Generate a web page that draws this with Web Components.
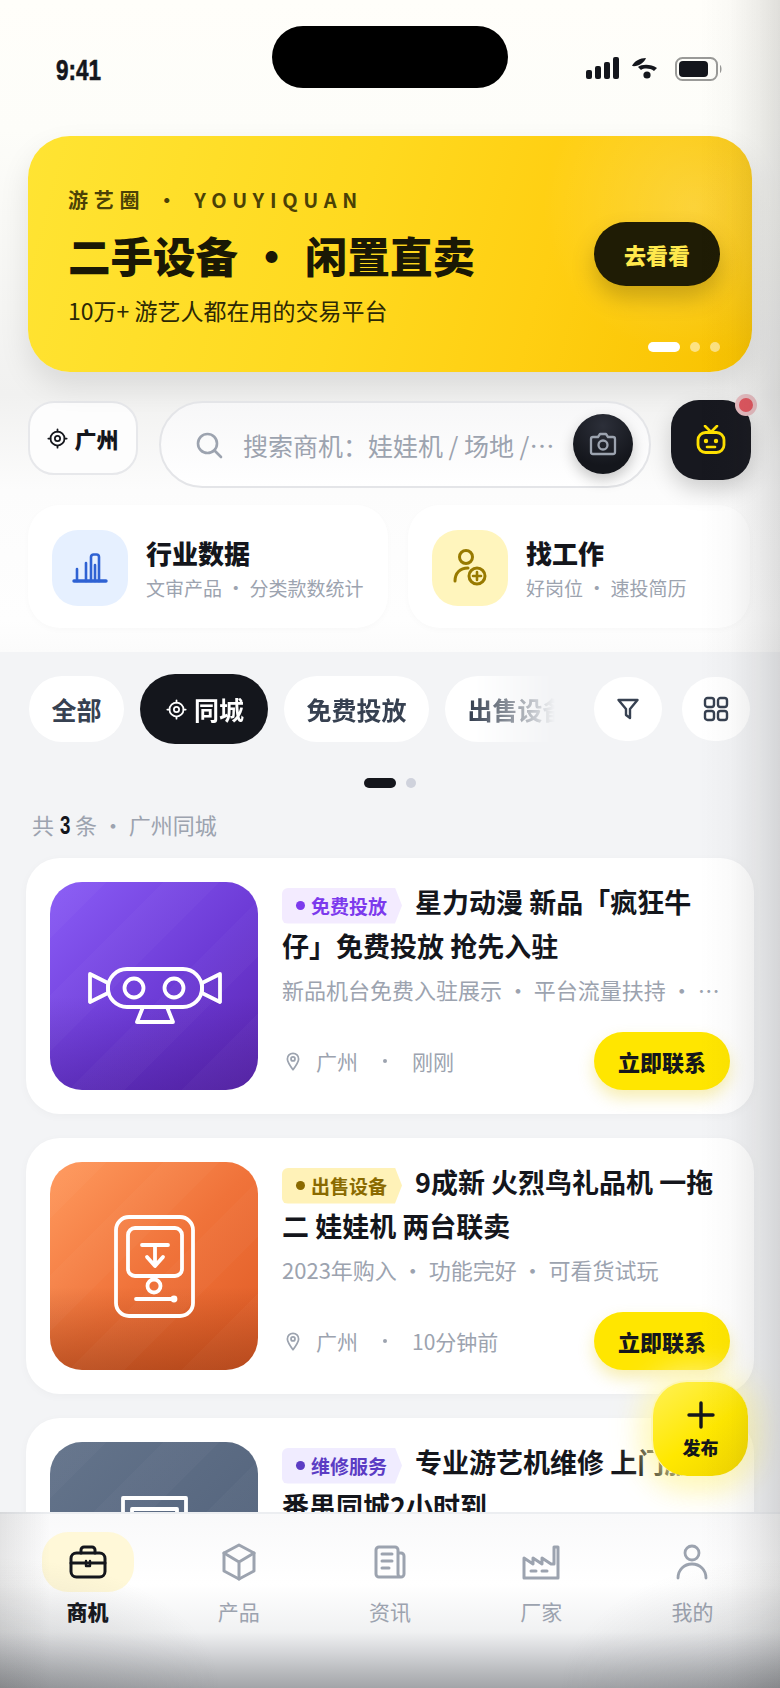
<!DOCTYPE html>
<html lang="zh-CN">
<head>
<meta charset="utf-8">
<title>游艺圈</title>
<style>
  html, body { margin: 0; padding: 0; background: #f3f4f6; }
  body { font-family: "Noto Sans CJK SC", "Noto Sans", sans-serif; color: #14161c; }
</style>
</head>
<body>
<app-screen>
  <status-bar></status-bar>
  <hero-banner></hero-banner>
  <search-row></search-row>
  <quick-links></quick-links>

  <div slot="lower">
    <filter-tabs></filter-tabs>
    <result-count></result-count>
    <listing-feed>
      <listing-card art="purple" tag="免费投放" tone="violet">星力动漫 新品「疯狂牛仔」免费投放 抢先入驻<span slot="desc">新品机台免费入驻展示 · 平台流量扶持 · 无中介费用</span><span slot="time">刚刚</span></listing-card>
      <listing-card art="orange" tag="出售设备" tone="gold">9成新 火烈鸟礼品机 一拖二 娃娃机 两台联卖<span slot="desc">2023年购入 · 功能完好 · 可看货试玩</span><span slot="time">10分钟前</span></listing-card>
      <listing-card art="slate" tag="维修服务" tone="indigo" partial>专业游艺机维修 上门服务 番禺同城2小时到</listing-card>
    </listing-feed>
  </div>

  <publish-fab slot="over"></publish-fab>
  <tab-bar slot="over"></tab-bar>
  <edge-shade slot="over"></edge-shade>
</app-screen>

<script>
// shared line icons
const svg = (w, h, box, body, extra = '') =>
  `<svg width="${w}" height="${h}" viewBox="${box}" fill="none" stroke="currentColor" stroke-linecap="round" stroke-linejoin="round" ${extra}>${body}</svg>`;

const locateIcon = (size) => svg(size, size, '0 0 24 24',
  `<circle cx="12" cy="12" r="8" stroke-width="2"/><circle cx="12" cy="12" r="3" stroke-width="2"/>
   <path d="M12 1.5v2.5M12 20v2.5M1.5 12H4M20 12h2.5" stroke-width="2"/>`);

class AppScreen extends HTMLElement {
  connectedCallback() {
    this.attachShadow({ mode: 'open' });
    this.shadowRoot.innerHTML = `
      <style>
        :host { display: block; position: relative; width: 780px; height: 1688px; overflow: hidden; background: #f3f4f6; }
        .upper { height: 652px; background: linear-gradient(180deg, #fffefa 0, #fdfdf9 130px, #f1f1f0 395px, #fcfcfc 490px, #fefefe 620px, #fbfbfb 652px); }
      </style>
      <div class="upper"><slot></slot></div>
      <slot name="lower"></slot>
      <slot name="over"></slot>
    `;
  }
}

class StatusBar extends HTMLElement {
  connectedCallback() {
    this.attachShadow({ mode: 'open' });
    this.shadowRoot.innerHTML = `
      <style>
        :host { display: block; position: relative; height: 136px; }
        .row { display: flex; justify-content: space-between; align-items: center; padding: 52px 57px 0 56px; height: 36px; }
        .time { display: inline-block; transform: scaleX(.75); transform-origin: left center; font: 700 30px/36px "Liberation Sans", sans-serif;
          -webkit-text-stroke: .6px #14161c; color: #14161c; }
        .icons { display: flex; align-items: center; }
        .island { position: absolute; left: 272px; top: 26px; width: 236px; height: 62px; border-radius: 31px; background: #000; }
      </style>
      <div class="island"></div>
      <div class="row">
        <span class="time">9:41</span>
        <span class="icons">
          <svg width="137" height="26" viewBox="0 0 137 26" fill="#14161c">
            <rect x="0" y="13" width="6" height="9" rx="2"/><rect x="9" y="9" width="6" height="13" rx="2"/>
            <rect x="18" y="5" width="6" height="17" rx="2"/><rect x="27" y="0" width="6" height="22" rx="2"/>
            <path d="M46 9 C48 4 54 1 60 1 C58 6 52 10 46 9Z"/>
            <path d="M52 10 C56 7 65 7 71 11 L68 14 C64 11 58 11 55 13Z"/>
            <circle cx="61" cy="18" r="3.6"/>
            <rect x="90" y="1" width="41" height="22" rx="6.5" fill="none" stroke="#9a9a98" stroke-width="2"/>
            <rect x="93" y="4" width="29" height="16" rx="4"/>
            <path d="M134 8 C136 9 136 15 134 16Z" fill="#9a9a98"/>
          </svg>
        </span>
      </div>
    `;
  }
}

class HeroBanner extends HTMLElement {
  connectedCallback() {
    this.attachShadow({ mode: 'open' });
    this.shadowRoot.innerHTML = `
      <style>
        :host { display: block; position: relative; margin: 0 28px; height: 236px; border-radius: 42px;
          background:
            radial-gradient(circle at 92% 30%, rgba(255,255,255,.2), rgba(255,255,255,0) 22%),
            linear-gradient(105deg, #ffe433 0, #ffd91f 45%, #ffcf12 70%, #f8c200 100%);
          box-shadow: 0 14px 30px rgba(0,0,0,.1); }
        .copy { padding: 49px 0 0 40px; }
        .kicker { font-size: 20px; line-height: 30px; font-weight: 700; letter-spacing: 5.7px; word-spacing: 1.5px; color: #4b4106; white-space: nowrap; }
        h1 { margin: 12px 0 0; font-size: 42.5px; line-height: 56px; font-weight: 900; word-spacing: 2.5px; color: #1a1805; white-space: nowrap; }
        p { margin: 10px 0 0; font-size: 23px; line-height: 34px; color: #2c2805; white-space: nowrap; }
        .go { position: absolute; right: 32px; top: 86px; width: 126px; height: 64px; border-radius: 32px; background: #1f1c05;
          color: #ffe94d; font-size: 22px; font-weight: 800; display: flex; align-items: center; justify-content: center;
          box-shadow: 0 12px 22px rgba(90,70,0,.3); }
        .dots { position: absolute; right: 32px; bottom: 20px; display: flex; gap: 10px; }
        .dots i { width: 10px; height: 10px; border-radius: 5px; background: rgba(255,255,255,.5); }
        .dots i:first-child { width: 32px; background: #fff; }
      </style>
      <div class="copy">
        <div class="kicker">游艺圈 · YOUYIQUAN</div>
        <h1>二手设备 · 闲置直卖</h1>
        <p>10万+ 游艺人都在用的交易平台</p>
      </div>
      <div class="go">去看看</div>
      <div class="dots"><i></i><i></i><i></i></div>
    `;
  }
}

class SearchRow extends HTMLElement {
  connectedCallback() {
    this.attachShadow({ mode: 'open' });
    this.shadowRoot.innerHTML = `
      <style>
        :host { display: flex; align-items: flex-start; margin-top: 29px; padding: 0 28px; height: 104px; }
        .city { box-sizing: border-box; width: 110px; height: 74px; border: 2px solid #e7e8eb; border-radius: 26px; background: #fdfdfd;
          display: flex; align-items: center; justify-content: center; gap: 6px; font-size: 22px; font-weight: 800; color: #14161c; }
        .search { box-sizing: border-box; position: relative; width: 492px; height: 87px; margin-left: 21px; border: 2px solid #e4e5e8; border-radius: 44px;
          background: linear-gradient(180deg, #f7f7f8, #fff); display: flex; align-items: center; padding-left: 34px; color: #9ca3af; }
        .text { margin-left: 20px; width: 314px; font-size: 25px; line-height: 36px; white-space: nowrap; overflow: hidden; text-overflow: ellipsis; }
        .camera { position: absolute; right: 16px; top: 11px; width: 60px; height: 60px; border-radius: 50%; color: #9ca3af;
          background: radial-gradient(circle at 50% 20%, #2c2f39, #14161c 70%); display: flex; align-items: center; justify-content: center;
          box-shadow: 0 6px 14px rgba(0,0,0,.22); }
        .bot { position: relative; width: 80px; height: 80px; margin-left: 20px; margin-top: -1px; border-radius: 28px; background: #17181f; color: #ffe100;
          display: flex; align-items: center; justify-content: center; box-shadow: 0 10px 22px rgba(0,0,0,.18); }
        .dot { position: absolute; right: -6px; top: -6px; width: 14px; height: 14px; border-radius: 50%; background: #e0565f; border: 4px solid rgba(232,232,234,.7); }
      </style>
      <div class="city">${locateIcon(21)}<span>广州</span></div>
      <div class="search">
        ${svg(28, 28, '0 0 28 28', '<circle cx="12.5" cy="12.5" r="9.5" stroke-width="2.6"/><path d="M19.5 19.5L26 26" stroke-width="2.6"/>')}
        <span class="text">搜索商机：娃娃机 / 场地 / 配件</span>
        <span class="camera">${svg(28, 24, '0 0 28 24', '<path d="M2 7a2 2 0 0 1 2-2h5l2-3h6l2 3h5a2 2 0 0 1 2 2v13a2 2 0 0 1-2 2H4a2 2 0 0 1-2-2z" stroke-width="2.300"/><circle cx="14" cy="13" r="4.500" stroke-width="2.300"/>')}</span>
      </div>
      <div class="bot">
        ${svg(30, 30, '0 0 30 30', '<path d="M9 1l6 6 6-6" stroke-width="2.6"/><rect x="2" y="7.5" width="26" height="20" rx="7.5" stroke-width="2.8"/><path d="M11 22h8" stroke-width="2.6"/><circle cx="10" cy="16" r="1.4" fill="currentColor" stroke-width="1.6"/><circle cx="20" cy="16" r="1.4" fill="currentColor" stroke-width="1.6"/>')}
        <span class="dot"></span>
      </div>
    `;
  }
}

class QuickLinks extends HTMLElement {
  connectedCallback() {
    this.attachShadow({ mode: 'open' });
    this.shadowRoot.innerHTML = `
      <style>
        :host { display: grid; grid-template-columns: 360px 342px; gap: 20px; padding: 0 28px; }
      </style>
      <quick-card tone="blue" sub="文审产品 · 分类款数统计">行业数据</quick-card>
      <quick-card tone="yellow" sub="好岗位 · 速投简历">找工作</quick-card>
    `;
  }
}

class QuickCard extends HTMLElement {
  connectedCallback() {
    const blue = this.getAttribute('tone') === 'blue';
    const icon = blue
      ? svg(36, 30, '0 0 36 30', '<path d="M2 28h32" stroke-width="3.4"/><path d="M5 28V16M14 28V10" stroke-width="2.6"/><path d="M19 28V4a2.5 2.5 0 0 1 2.5-2.5h3A2.5 2.5 0 0 1 27 4v24M23 28V12" stroke-width="2.6"/>')
      : svg(34, 40, '0 0 34 40', '<circle cx="13" cy="9" r="6.5" stroke-width="3"/><path d="M2 33c0-8 5-13 13-13" stroke-width="3"/><circle cx="24" cy="28" r="8" stroke-width="3"/><path d="M24 24v8M20 28h8" stroke-width="2.6"/>');
    this.attachShadow({ mode: 'open' });
    this.shadowRoot.innerHTML = `
      <style>
        :host { display: flex; align-items: center; gap: 18px; box-sizing: border-box; height: 123px; padding: 3px 24px 0; border-radius: 32px;
          background: #fff; box-shadow: 0 2px 6px rgba(0,0,0,.025); }
        .tile { flex: none; width: 76px; height: 76px; border-radius: 26px; display: flex; align-items: center; justify-content: center;
          background: ${blue ? '#e6f0ff' : '#fff5bd'}; color: ${blue ? '#2f62d3' : '#987a00'}; }
        .name { font-size: 26px; line-height: 36px; font-weight: 800; color: #14161c; }
        .sub { margin-top: 3px; font-size: 19px; line-height: 28px; color: #9ca3af; white-space: nowrap; }
      </style>
      <div class="tile">${icon}</div>
      <div>
        <div class="name"><slot></slot></div>
        <div class="sub">${this.getAttribute('sub')}</div>
      </div>
    `;
  }
}

class FilterTabs extends HTMLElement {
  connectedCallback() {
    this.attachShadow({ mode: 'open' });
    this.shadowRoot.innerHTML = `
      <style>
        :host { display: block; padding-top: 22px; }
        .row { display: flex; justify-content: space-between; align-items: center; padding: 0 30px 0 29px; height: 70px; }
        .scroll { display: flex; align-items: center; gap: 16px; width: 526px; height: 70px; overflow: hidden;
          -webkit-mask-image: linear-gradient(90deg, #000 84%, transparent 100%); mask-image: linear-gradient(90deg, #000 84%, transparent 100%); }
        .tab { flex: none; box-sizing: border-box; height: 66px; padding: 0 22.5px; border-radius: 33px; background: #fff; color: #374151;
          font-size: 25px; font-weight: 700; display: flex; align-items: center; white-space: nowrap; }
        .tab.on { height: 70px; border-radius: 35px; padding: 0 24px 0 26px; gap: 7px; background: #14161c; color: #fff; }
        .tools { display: flex; gap: 20px; }
        .tool { width: 68px; height: 64px; border-radius: 32px; background: #fff; color: #374151; display: flex; align-items: center; justify-content: center; }
        .pager { display: flex; justify-content: center; gap: 10px; margin-top: 34px; }
        .pager i { width: 10px; height: 10px; border-radius: 5px; background: #cfd2dc; }
        .pager i:first-child { width: 32px; background: #14161c; }
      </style>
      <div class="row">
        <div class="scroll">
          <div class="tab">全部</div>
          <div class="tab on">${locateIcon(21)}<span>同城</span></div>
          <div class="tab">免费投放</div>
          <div class="tab">出售设备</div>
        </div>
        <div class="tools">
          <div class="tool">${svg(24, 24, '0 0 24 24', '<path d="M2.500 3h19l-7.500 9v9l-4-3v-6z" stroke-width="2.400"/>')}</div>
          <div class="tool">${svg(26, 26, '0 0 26 26', '<rect x="2" y="2" width="9" height="9" rx="2.500" stroke-width="2.400"/><rect x="15" y="2" width="9" height="9" rx="2.500" stroke-width="2.400"/><rect x="2" y="15" width="9" height="9" rx="2.500" stroke-width="2.400"/><rect x="15" y="15" width="9" height="9" rx="2.500" stroke-width="2.400"/>')}</div>
        </div>
      </div>
      <div class="pager"><i></i><i></i></div>
    `;
  }
}

class ResultCount extends HTMLElement {
  connectedCallback() {
    this.attachShadow({ mode: 'open' });
    this.shadowRoot.innerHTML = `
      <style>
        :host { display: block; margin-top: 20px; padding-left: 32px; height: 32px; font-size: 22px; line-height: 32px; color: #9ca3af; }
        b { display: inline-block; transform: scaleX(.72); margin: 0 3px 0 3.500px; font: 700 26px/32px "Liberation Sans", sans-serif; color: #14161c; }
      </style>
      共<b>3</b>条 · 广州同城
    `;
  }
}

class ListingFeed extends HTMLElement {
  connectedCallback() {
    this.attachShadow({ mode: 'open' });
    this.shadowRoot.innerHTML = `
      <style>
        :host { display: flex; flex-direction: column; gap: 24px; padding: 18px 0 0 26px; }
      </style>
      <slot></slot>
    `;
  }
}

const arts = {
  purple: {
    bg: 'linear-gradient(180deg, rgba(60,20,120,0) 55%, rgba(60,20,130,.35) 100%), linear-gradient(135deg, #8a5cf6 0, #6d3bd6 55%, #5b25b0 100%)',
    icon: `<path d="M40 92l18 9v10l-18 9zM170 92l-18 9v10l18 9z"/><rect x="58" y="87" width="94" height="38" rx="19"/><circle cx="84" cy="106" r="9.500"/><circle cx="124" cy="106" r="9.500"/><path d="M93 125l-6 15h36l-6-15"/>`
  },
  orange: {
    bg: 'linear-gradient(180deg, rgba(120,40,0,0) 60%, rgba(130,45,10,.45) 100%), linear-gradient(135deg, #ff9a5e 0, #f0733a 50%, #df5a24 100%)',
    icon: `<rect x="66" y="55" width="77" height="99" rx="13"/><rect x="78" y="66" width="54" height="48" rx="7"/><path d="M92 83h26M105 83v20M97 95l8 9 8-9"/><circle cx="104" cy="124" r="6.500"/><path d="M86 137h39"/><circle cx="124" cy="137" r="1.500"/>`
  },
  slate: {
    bg: 'linear-gradient(135deg, #64748b 0, #4f5f78 100%)',
    icon: `<rect x="73" y="56" width="63" height="76"/><rect x="82" y="67" width="45" height="26"/>`
  }
};

const tones = {
  violet: ['#f3ebff', '#7c3aed'],
  gold: ['#fff2b8', '#8a6a00'],
  indigo: ['#f0ecff', '#5b3cc4']
};

class ListingCard extends HTMLElement {
  connectedCallback() {
    const art = arts[this.getAttribute('art')];
    const [tagBg, tagFg] = tones[this.getAttribute('tone')];
    const partial = this.hasAttribute('partial');
    this.attachShadow({ mode: 'open' });
    this.shadowRoot.innerHTML = `
      <style>
        :host { display: flex; flex: none; gap: 24px; box-sizing: border-box; width: 728px; height: 256px; padding: 24px; border-radius: 34px;
          background: #fff; box-shadow: 0 2px 10px rgba(0,0,0,.03); }
        .art { position: relative; flex: none; width: 208px; height: 208px; border-radius: 32px; overflow: hidden; background: ${art.bg}; }
        .art::after { content: ""; position: absolute; inset: 0;
          background: repeating-linear-gradient(135deg, rgba(255,255,255,.025) 0 40px, rgba(255,255,255,0) 40px 80px); }
        .art svg { position: absolute; left: 0; top: 0; z-index: 1; }
        .body { flex: 1; min-width: 0; margin-top: -2px; display: flex; flex-direction: column; }
        .title { margin: 0; font-size: 27px; line-height: 44px; font-weight: 700; color: #14161c; }
        .tag { display: inline-flex; align-items: center; gap: 6px; box-sizing: border-box; height: 36px; width: 120px; padding-left: 14px; margin-right: 13px;
          vertical-align: 3px; line-height: 36px; border-radius: 6px 0 0 6px; background: ${tagBg}; color: ${tagFg}; font-size: 19px; font-weight: 700;
          clip-path: polygon(0 0, 113px 0, 120px 50%, 113px 100%, 0 100%); }
        .tag i { width: 9px; height: 9px; border-radius: 50%; background: currentColor; }
        .desc { margin-top: 5px; height: 32px; font-size: 22px; line-height: 32px; color: #9ca3af; white-space: nowrap; overflow: hidden; text-overflow: ellipsis; }
        .foot { margin-top: auto; display: flex; align-items: center; justify-content: space-between; height: 58px; }
        .meta { display: flex; align-items: center; padding-left: 3px; font-size: 21px; color: #9ca3af; }
        .meta svg { margin-right: 15px; }
        .meta i { width: 4px; height: 4px; margin: 0 25px; border-radius: 50%; background: #9ca3af; }
        .cta { width: 136px; height: 58px; border-radius: 29px; background: #ffe600; color: #14161c; font-size: 22px; font-weight: 800;
          display: flex; align-items: center; justify-content: center; box-shadow: 0 8px 16px rgba(230,200,0,.3); }
      </style>
      <div class="art">${svg(208, 208, '0 0 208 208', art.icon, 'color="#fff" stroke-width="3.8"')}</div>
      <div class="body">
        <div class="title"><span class="tag"><i></i>${this.getAttribute('tag')}</span><slot></slot></div>
        ${partial ? '' : `
        <div class="desc"><slot name="desc"></slot></div>
        <div class="foot">
          <div class="meta">
            ${svg(16, 19, '0 0 16 22', '<path d="M8 20.500C4 15 1.500 11.500 1.500 8a6.500 6.500 0 0 1 13 0c0 3.500-2.500 7-6.500 12.500z" stroke-width="2"/><circle cx="8" cy="8" r="2.300" stroke-width="2"/>')}
            <span>广州</span><i></i><slot name="time"></slot>
          </div>
          <div class="cta">立即联系</div>
        </div>`}
      </div>
    `;
  }
}

class PublishFab extends HTMLElement {
  connectedCallback() {
    this.attachShadow({ mode: 'open' });
    this.shadowRoot.innerHTML = `
      <style>
        :host { position: absolute; left: 651px; top: 1380px; width: 97px; height: 96px; box-sizing: border-box; border-radius: 36px; z-index: 3;
          background: linear-gradient(145deg, #fff156, #ffe800 55%, #efd400); border: 2px solid #fdf6b5; border-bottom: 0; border-right: 0;
          box-shadow: 0 0 30px 10px rgba(255,250,190,.7), 0 10px 30px rgba(255,225,0,.3); color: #14161c;
          display: flex; flex-direction: column; align-items: center; font-size: 18px; font-weight: 800; line-height: 24px; padding-top: 19px; }
        span { margin-top: 6px; }
      </style>
      ${svg(28, 28, '0 0 28 28', '<path d="M14 2v24M2 14h24" stroke-width="3.400"/>')}
      <span>发布</span>
    `;
  }
}

const navIcons = {
  briefcase: svg(38, 34, '0 0 38 34', '<rect x="2" y="8" width="34" height="24" rx="5.500" stroke-width="3"/><path d="M12 8V5a3 3 0 0 1 3-3h8a3 3 0 0 1 3 3v3M2 18h34" stroke-width="3"/><path d="M17 16v5h4v-5" stroke-width="2.400"/>'),
  box: svg(36, 38, '0 0 36 38', '<path d="M18 2l15 8v18l-15 8-15-8V10z" stroke-width="3"/><path d="M3 10l15 9 15-9M18 19v17" stroke-width="3"/>'),
  news: svg(34, 34, '0 0 34 34', '<path d="M25 8h3a3 3 0 0 1 3 3v18a3 3 0 0 1-3 3H6a3 3 0 0 1-3-3V5a3 3 0 0 1 3-3h16a3 3 0 0 1 3 3v24a3 3 0 0 0 3 3" stroke-width="3"/><path d="M9 9h10M9 16h10M9 23h7" stroke-width="3"/>'),
  factory: svg(38, 36, '0 0 38 36', '<path d="M2 34V14l9 6v-6l9 6v-6l9 6h3V3h4v31z" stroke-width="3"/><path d="M9 27h5M20 27h5" stroke-width="3"/>'),
  user: svg(32, 36, '0 0 32 36', '<circle cx="16" cy="9" r="7" stroke-width="2.800"/><path d="M2 34c0-8 6-14 14-14s14 6 14 14" stroke-width="2.800"/>')
};

class TabBar extends HTMLElement {
  connectedCallback() {
    this.attachShadow({ mode: 'open' });
    const items = [['briefcase', '商机'], ['box', '产品'], ['news', '资讯'], ['factory', '厂家'], ['user', '我的']];
    this.shadowRoot.innerHTML = `
      <style>
        :host { position: absolute; left: 0; top: 1512px; width: 780px; height: 176px; box-sizing: border-box; z-index: 2; padding: 18px 12px 0;
          display: grid; grid-template-columns: repeat(5, 1fr); align-items: start;
          border-top: 2px solid #eceef1;
          background: linear-gradient(180deg, #f9f9fa 0, #fff 70px, #f0f1f2 118px, #d5d6d9 138px, #b8babd 158px, #a0a2a6 176px); }
        .item { display: flex; flex-direction: column; align-items: center; color: #9ca3af; font-size: 21px; line-height: 30px; }
        .pic { display: flex; align-items: center; justify-content: center; width: 92px; height: 60px; border-radius: 26px; margin-bottom: 4px; }
        .item.on { color: #14161c; font-weight: 800; }
        .item.on .pic { background: #fff8d8; }
      </style>
      ${items.map(([icon, label], i) => `
        <div class="item${i === 0 ? ' on' : ''}">
          <div class="pic">${navIcons[icon]}</div>
          <span>${label}</span>
        </div>`).join('')}
    `;
  }
}

class EdgeShade extends HTMLElement {
  connectedCallback() {
    this.attachShadow({ mode: 'open' });
    this.shadowRoot.innerHTML = `
      <style>
        :host { position: absolute; inset: 0; z-index: 4; pointer-events: none;
          background:
            radial-gradient(ellipse 220px 130px at 0 100%, rgba(80,82,86,.22), rgba(80,82,86,0)),
            radial-gradient(ellipse 220px 130px at 100% 100%, rgba(80,82,86,.18), rgba(80,82,86,0)),
            linear-gradient(270deg, rgba(60,60,60,.16) 0, rgba(60,60,60,.09) 22px, rgba(60,60,60,.025) 50px, rgba(60,60,60,0) 80px),
            linear-gradient(90deg, rgba(60,60,60,.12) 0, rgba(60,60,60,0) 50px) 0 1512px / 100% 176px no-repeat; }
      </style>
    `;
  }
}

customElements.define('app-screen', AppScreen);
customElements.define('status-bar', StatusBar);
customElements.define('hero-banner', HeroBanner);
customElements.define('search-row', SearchRow);
customElements.define('quick-links', QuickLinks);
customElements.define('quick-card', QuickCard);
customElements.define('filter-tabs', FilterTabs);
customElements.define('result-count', ResultCount);
customElements.define('listing-feed', ListingFeed);
customElements.define('listing-card', ListingCard);
customElements.define('publish-fab', PublishFab);
customElements.define('tab-bar', TabBar);
customElements.define('edge-shade', EdgeShade);
</script>
</body>
</html>
